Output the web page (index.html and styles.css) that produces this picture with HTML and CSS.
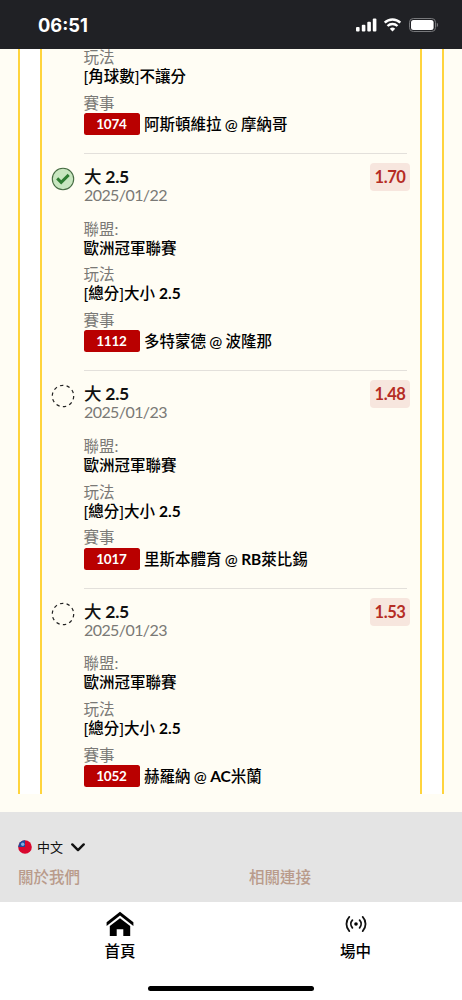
FILE: index.html
```html
<!DOCTYPE html>
<html lang="zh-Hant">
<head>
<meta charset="utf-8">
<meta name="viewport" content="width=device-width, initial-scale=1">
<title>投注單</title>
<link rel="stylesheet" href="styles.css">
</head>
<body>
<div class="screen">
  <header class="status">
    <span class="time">06:51</span>
    <svg class="status-icons" width="84" height="16" viewBox="0 0 84 16">
      <g fill="#fff">
        <rect x="1" y="10" width="3.6" height="4.6" rx="1"/><rect x="6.8" y="7.7" width="3.6" height="6.9" rx="1"/><rect x="12.3" y="4.7" width="3.6" height="9.9" rx="1"/><rect x="17.8" y="1.6" width="3.6" height="13" rx="1"/>
        <path d="M37.5 14.5l-2.7-2.7a3.9 3.9 0 0 1 5.4 0z"/>
      </g>
      <g fill="none" stroke="#fff" stroke-width="2.4"><path d="M29.7 5.7a11.1 11.1 0 0 1 15.6 0"/><path d="M32.5 9a7.2 7.2 0 0 1 10 0"/></g>
      <rect x="54.5" y="1.5" width="26" height="13" rx="3.8" fill="none" stroke="#77787b"/>
      <rect x="56" y="3" width="22.6" height="10" rx="2.5" fill="#fff"/>
      <path d="M81.8 5.8v4.4q1.3-.6 1.3-2.2t-1.3-2.2z" fill="#77787b"/>
    </svg>
  </header>

  <main class="content">
    <div class="outer-card">
      <div class="slip">
        <section class="bet bet-first">
          <div class="field"><div class="label">玩法</div><div class="value">[角球數]不讓分</div></div>
          <div class="field"><div class="label">賽事</div><div class="match"><span class="tag">1074</span>阿斯頓維拉 @ 摩納哥</div></div>
        </section>

        <section class="bet">
          <svg class="mark" width="24" height="24" viewBox="0 0 24 24"><circle cx="12" cy="12" r="10.7" fill="#c8e6c0" stroke="#456b42" stroke-width="1.1"/><path d="M6.2 11.4l4 4 7.5-7.5" fill="none" stroke="#2e7d32" stroke-width="2.9"/></svg>
          <div class="head"><div class="pick">大 <span class="line">2.5</span></div><span class="odds">1.70</span></div>
          <div class="date">2025/01/22</div>
          <div class="field"><div class="label">聯盟:</div><div class="value">歐洲冠軍聯賽</div></div>
          <div class="field"><div class="label">玩法</div><div class="value">[總分]大小 <span class="line">2.5</span></div></div>
          <div class="field"><div class="label">賽事</div><div class="match"><span class="tag">1112</span>多特蒙德 @ 波隆那</div></div>
        </section>

        <section class="bet">
          <svg class="mark" width="24" height="24" viewBox="0 0 24 24"><circle cx="12" cy="12" r="10.7" fill="none" stroke="#222" stroke-width="1.2" stroke-dasharray="3.4 3.32"/></svg>
          <div class="head"><div class="pick">大 <span class="line">2.5</span></div><span class="odds">1.48</span></div>
          <div class="date">2025/01/23</div>
          <div class="field"><div class="label">聯盟:</div><div class="value">歐洲冠軍聯賽</div></div>
          <div class="field"><div class="label">玩法</div><div class="value">[總分]大小 <span class="line">2.5</span></div></div>
          <div class="field"><div class="label">賽事</div><div class="match"><span class="tag">1017</span>里斯本體育 @ <span class="line">RB</span>萊比錫</div></div>
        </section>

        <section class="bet">
          <svg class="mark" width="24" height="24" viewBox="0 0 24 24"><circle cx="12" cy="12" r="10.7" fill="none" stroke="#222" stroke-width="1.2" stroke-dasharray="3.4 3.32"/></svg>
          <div class="head"><div class="pick">大 <span class="line">2.5</span></div><span class="odds">1.53</span></div>
          <div class="date">2025/01/23</div>
          <div class="field"><div class="label">聯盟:</div><div class="value">歐洲冠軍聯賽</div></div>
          <div class="field"><div class="label">玩法</div><div class="value">[總分]大小 <span class="line">2.5</span></div></div>
          <div class="field"><div class="label">賽事</div><div class="match"><span class="tag">1052</span>赫羅納 @ <span class="line">AC</span>米蘭</div></div>
        </section>
      </div>
    </div>
  </main>

  <footer class="footer">
    <div class="language">
      <svg width="14" height="14" viewBox="0 0 14 14"><circle cx="7" cy="7" r="6.8" fill="#d9082f"/><path d="M7 .2A6.8 6.8 0 0 0 .2 7H7z" fill="#1d4c9c"/><circle cx="4.7" cy="4.2" r="1.7" fill="#82aee0"/></svg>
      <span class="language-name">中文</span>
      <svg class="chevron" width="14" height="10" viewBox="0 0 14 10"><path d="M1.3 2.4L7 8.1 12.7 2.4" fill="none" stroke="#111" stroke-width="2.4" stroke-linecap="round" stroke-linejoin="round"/></svg>
    </div>
    <div class="links"><span>關於我們</span><span>相關連接</span></div>
  </footer>

  <nav class="tabs">
    <div class="tab tab-home">
      <svg width="28" height="26" viewBox="0 0 28 26"><path d="M14 .7L.6 11.2v3.7L14 4.6l13.4 10.3v-3.7zM14 7.2L3.8 15v10h6.9v-6.8h6.6V25h6.9V15z" fill="#000"/></svg>
      <span>首頁</span>
    </div>
    <div class="tab tab-live">
      <svg width="22" height="26" viewBox="0 0 22 26"><circle cx="11" cy="13" r="1.8"/><g fill="none" stroke="#111" stroke-width="1.8" stroke-linecap="round"><path d="M7.4 9.2a5.6 5.6 0 0 0 0 7.6M14.6 9.2a5.6 5.6 0 0 1 0 7.6M4.3 5.9a10.3 10.3 0 0 0 0 14.2M17.7 5.9a10.3 10.3 0 0 1 0 14.2"/></g></svg>
      <span>場中</span>
    </div>
    <div class="home-bar"></div>
  </nav>
</div>
</body>
</html>
```
FILE: styles.css
```css
* { box-sizing: border-box; }
body {
  margin: 0;
  font-family: Lato, "Noto Sans CJK TC", sans-serif;
  font-size: 15.5px;
  color: #111;
}
.screen {
  width: 462px;
  height: 1000px;
  display: flex;
  flex-direction: column;
  overflow: hidden;
  background: #fff;
}
.status {
  flex: none;
  height: 49px;
  padding: 1px 23px 0 38px;
  display: flex;
  align-items: center;
  justify-content: space-between;
  background: #202125;
}
.time {
  font: 700 18.3px Inter, sans-serif;
  color: #fff;
}
.content {
  flex: none;
  height: 763px;
  padding: 0 18px 18px;
  background: #fffdf4;
  overflow: hidden;
}
.outer-card {
  height: 745px;
  padding: 0 20px;
  border: solid #ffd43d;
  border-width: 0 2px;
  background: #fff;
}
.slip {
  height: 745px;
  padding: 0 13px 0 42px;
  border: solid #ffd43d;
  border-width: 0 2px;
  background: #fffdf4;
  overflow: hidden;
}
.bet {
  position: relative;
  height: 217.4px;
  padding-top: 12px;
  border-top: 1px solid #e3e0db;
}
.bet-first {
  height: 105px;
  margin-top: -1px;
  padding-top: 0;
  border-top: 0;
}
.mark {
  position: absolute;
  left: -33px;
  top: 13px;
}
.head {
  display: flex;
  justify-content: space-between;
  height: 22px;
  margin-right: -3px;
}
.pick {
  font-size: 17.5px;
  font-weight: 500;
  line-height: 22px;
  letter-spacing: -0.3px;
}
.line { font-weight: 700; }
.odds {
  width: 40px;
  height: 28px;
  margin-top: -3px;
  border-radius: 4px;
  background: #f7e6de;
  color: #b52c24;
  font-size: 16.5px;
  font-weight: 700;
  line-height: 28px;
  letter-spacing: -0.4px;
  text-align: center;
}
.date {
  margin-top: -2px;
  margin-bottom: 16.6px;
  font-size: 16px;
  line-height: 17px;
  letter-spacing: -0.58px;
  color: #7a7976;
}
.field { margin-bottom: 7.6px; }
.label {
  line-height: 18px;
  color: #7a7976;
  margin-left: -0.5px;
}
.value, .match {
  margin-left: -0.5px;
  color: #000;
  font-weight: 500;
  line-height: 20px;
}
.match {
  display: flex;
  align-items: center;
  height: 22px;
  margin-top: 1.5px;
  white-space: pre;
  word-spacing: -0.6px;
}
.tag {
  width: 56px;
  height: 22px;
  margin-right: 4.5px;
  border-radius: 2.5px;
  background: #b90000;
  color: #fff;
  font-size: 13.5px;
  font-weight: 700;
  line-height: 22px;
  letter-spacing: -0.2px;
  text-align: center;
}
.footer {
  flex: none;
  height: 90px;
  padding: 25px 18px 0;
  background: #e4e4e4;
}
.language {
  display: flex;
  align-items: center;
  height: 20px;
  gap: 5px;
  font-size: 13px;
}
.language-name { margin-bottom: 2px; }
.chevron { margin-left: 3px; }
.links {
  display: grid;
  grid-template-columns: 231px 1fr;
  margin-top: 9px;
  color: #b99b8b;
  font-weight: 500;
  line-height: 22px;
}
.tabs {
  position: relative;
  flex: 1;
  display: flex;
  background: #fff;
}
.tab {
  flex: none;
  display: flex;
  flex-direction: column;
  align-items: center;
  padding-top: 9px;
  gap: 2px;
  color: #000;
  font-weight: 500;
  line-height: 24px;
}
.tab-home { width: 240px; }
.tab-live { width: 231px; }
.home-bar {
  position: absolute;
  left: 148px;
  bottom: 9px;
  width: 166px;
  height: 5px;
  border-radius: 3px;
  background: #000;
}
```
